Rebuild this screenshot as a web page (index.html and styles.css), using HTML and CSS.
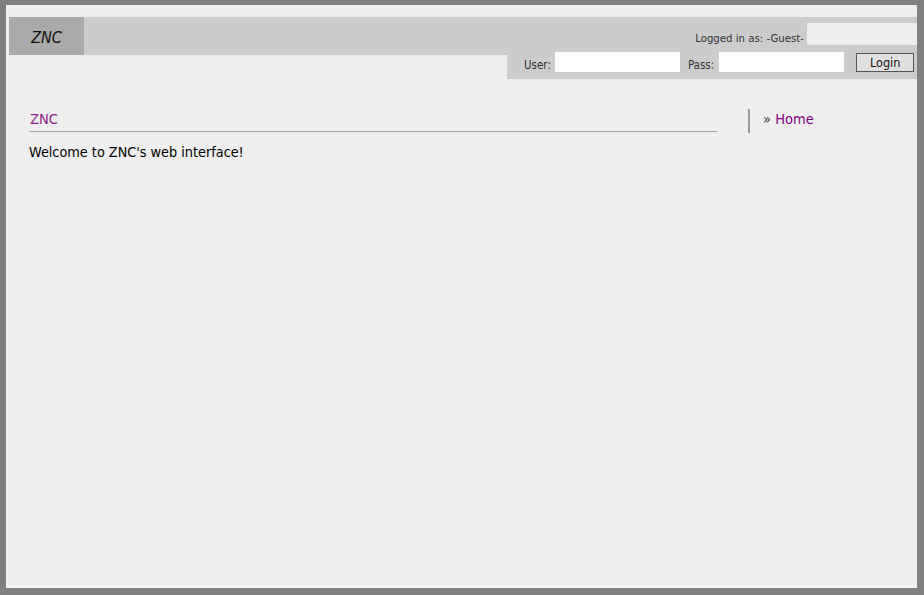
FILE: index.html
```html
<!DOCTYPE html>
<html>
<head>
<meta charset="utf-8">
<title>ZNC</title>
<link rel="stylesheet" href="styles.css">
</head>
<body>
<div class="frame">
  <div class="header">
    <div class="logo">ZNC</div>
    <div class="user-area">
      <span class="logged">Logged in as: -Guest-</span>
      <div class="user-box"></div>
    </div>
  </div>
  <div class="login-row">
    <form class="login">
      <label class="lbl">User:</label>
      <input class="field" type="text">
      <label class="lbl lbl-pass">Pass:</label>
      <input class="field" type="password">
      <button class="btn" type="button">Login</button>
    </form>
  </div>
  <div class="body">
    <div class="main">
      <h1 class="title">ZNC</h1>
      <p class="welcome">Welcome to ZNC's web interface!</p>
    </div>
    <div class="side">
      <div class="crumb"><span class="raquo">»</span> <a class="home" href="#">Home</a></div>
    </div>
  </div>
</div>
</body>
</html>
```

FILE: styles.css
```css
html, body {
  margin: 0;
  padding: 0;
  height: 100%;
}
body {
  background: #808080;
  font-family: "DejaVu Sans Condensed", "DejaVu Sans", sans-serif;
  color: #000;
}
.frame {
  margin: 5px 7px 0 6px;
  height: 583px;
  background: #eeeeee;
  box-sizing: border-box;
  border-left: 1px solid #f4f4f4;
  border-bottom: 2px solid #f4f4f4;
  padding-top: 12px;
}
.header {
  margin-left: 2px;
  height: 38px;
  background: #cccccc;
  display: flex;
  justify-content: space-between;
  align-items: flex-start;
}
.logo {
  width: 75px;
  height: 38px;
  box-sizing: border-box;
  padding-top: 2px;
  background: #aaaaaa;
  font-style: italic;
  font-size: 16px;
  line-height: 38px;
  text-align: center;
  color: #111;
}
.user-area {
  display: flex;
  align-items: flex-start;
  padding-top: 6px;
}
.logged {
  font-size: 11.3px;
  color: #333;
  line-height: 22px;
  padding-top: 5px;
  margin-right: 3px;
}
.user-box {
  width: 110px;
  height: 22px;
  background: #eeeeee;
}
.login-row {
  display: flex;
  justify-content: flex-end;
  margin-top: -3px;
}
.login {
  width: 410px;
  height: 27px;
  box-sizing: border-box;
  background: #cccccc;
  margin: 0;
  padding-left: 17px;
  display: flex;
  align-items: flex-start;
  font-size: 11.5px;
  color: #333;
}
.lbl {
  line-height: 22px;
  padding-top: 2px;
  margin-right: 4px;
}
.lbl-pass {
  margin-left: 8px;
  margin-right: 5px;
}
.field {
  width: 125px;
  height: 20px;
  box-sizing: border-box;
  border: none;
  background: #fff;
  padding: 0;
  margin: 0;
}
.btn {
  margin: 1px 0 0 12px;
  width: 58px;
  height: 19px;
  box-sizing: border-box;
  border: 1px solid #555;
  background: #e0e0e0;
  font-family: "DejaVu Sans Condensed", "DejaVu Sans", sans-serif;
  font-size: 12.5px;
  color: #111;
  padding: 0;
}
.body {
  display: flex;
  padding: 31px 0 0 22px;
}
.main {
  width: 688px;
}
.title {
  margin: 0;
  font-size: 14.5px;
  font-weight: normal;
  color: #8c1c8c;
  padding: 0 0 3px 1px;
  border-bottom: 1px solid #a0a0a0;
  line-height: 18px;
}
.welcome {
  margin: 11px 0 0;
  font-size: 14.3px;
  line-height: 18px;
}
.side {
  margin-left: 31px;
}
.crumb {
  border-left: 2px solid #999;
  height: 24px;
  margin-top: -1px;
  padding-left: 13px;
  font-size: 14.5px;
  line-height: 21px;
}
.raquo {
  color: #333;
}
.home {
  color: #800080;
  text-decoration: none;
}
```
